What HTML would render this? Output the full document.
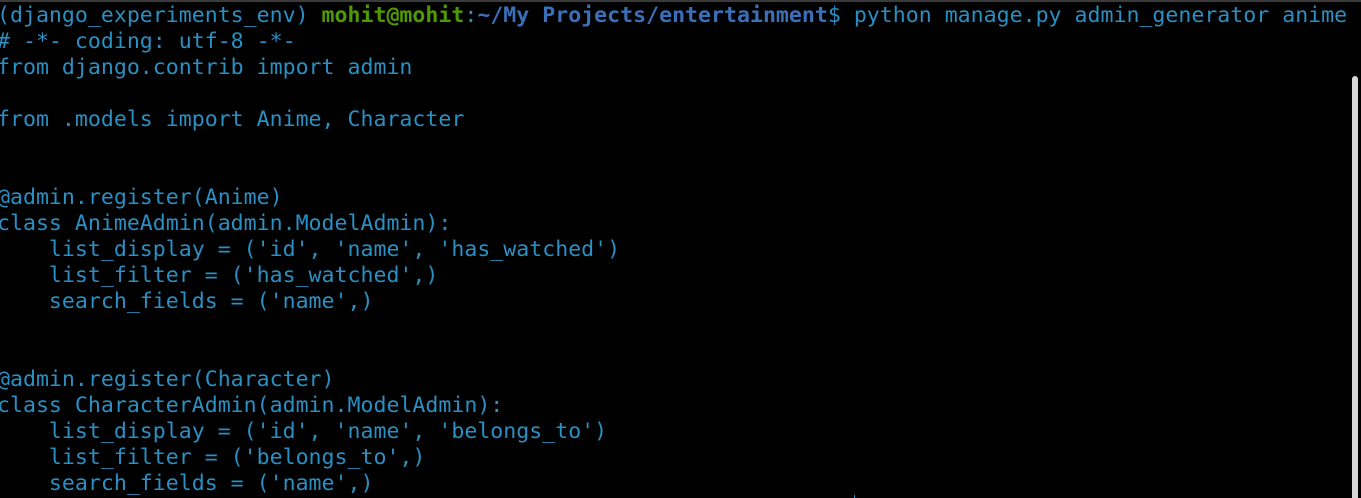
<!DOCTYPE html>
<html><head><meta charset="utf-8"><style>
html,body{margin:0;padding:0;background:#000;width:1361px;height:498px;overflow:hidden;position:relative}
.top{position:absolute;left:0;top:0;width:1361px;height:2px;background:#3a3a3a}
pre{position:absolute;left:-3px;top:3px;margin:0;font-family:"DejaVu Sans Mono","Liberation Mono",monospace;font-size:21.57px;line-height:26px;color:#2a8fc3;white-space:pre}
.g{color:#4e9a06;font-weight:bold}
.b{color:#3b6fb8;font-weight:bold}
.sb{position:absolute;left:1352px;top:76px;width:6px;height:422px;background:#d6d6d6;border-radius:3px 3px 0 0}
.cur{position:absolute;left:854px;top:495px;width:1px;height:3px;background:#2a8fc3}
</style></head><body>
<div class="top"></div>
<pre>(django_experiments_env) <span class="g">mohit@mohit</span>:<span class="b">~/My Projects/entertainment</span>$ python manage.py admin_generator anime
# -*- coding: utf-8 -*-
from django.contrib import admin

from .models import Anime, Character


@admin.register(Anime)
class AnimeAdmin(admin.ModelAdmin):
    list_display = ('id', 'name', 'has_watched')
    list_filter = ('has_watched',)
    search_fields = ('name',)


@admin.register(Character)
class CharacterAdmin(admin.ModelAdmin):
    list_display = ('id', 'name', 'belongs_to')
    list_filter = ('belongs_to',)
    search_fields = ('name',)</pre>
<div class="sb"></div>
<div class="cur"></div>
</body></html>
